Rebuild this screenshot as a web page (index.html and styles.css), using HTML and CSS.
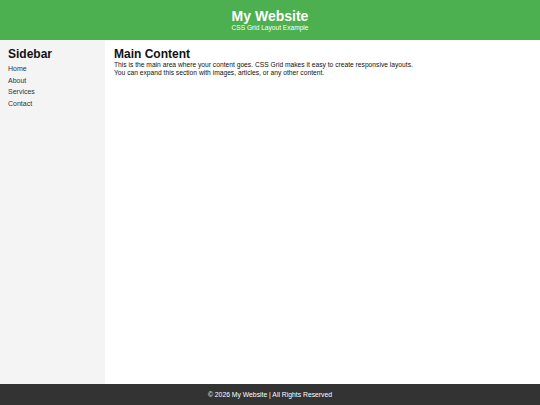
FILE: index.html
```html
<!DOCTYPE html>
<html>
<head>
<meta charset="utf-8">
<link rel="stylesheet" href="styles.css">
</head>
<body>
<div class="page">
  <header class="header">
    <h1 class="title">My Website</h1>
    <p class="subtitle">CSS Grid Layout Example</p>
  </header>
  <aside class="sidebar">
    <h2 class="side-title">Sidebar</h2>
    <ul class="nav">
      <li>Home</li>
      <li>About</li>
      <li>Services</li>
      <li>Contact</li>
    </ul>
  </aside>
  <main class="main">
    <h2 class="main-title">Main Content</h2>
    <p class="text">This is the main area where your content goes. CSS Grid makes it easy to create responsive layouts.<br>You can expand this section with images, articles, or any other content.</p>
  </main>
  <footer class="footer">© 2026 My Website | All Rights Reserved</footer>
</div>
</body>
</html>
```
FILE: styles.css
```css
html, body {
  margin: 0;
  padding: 0;
}
body {
  font-family: "Liberation Sans", Arial, sans-serif;
}
.page {
  display: grid;
  grid-template-columns: 105px 1fr;
  grid-template-rows: 40px 1fr 21px;
  height: 405px;
}
.header {
  grid-column: 1 / 3;
  background: #4caf50;
  color: #fff;
  text-align: center;
  padding-top: 8px;
  box-sizing: border-box;
}
.title {
  margin: 0;
  font-size: 14px;
  line-height: 16px;
  font-weight: bold;
}
.subtitle {
  margin: 0;
  font-size: 6.6px;
  line-height: 7px;
}
.sidebar {
  background: #f4f4f4;
  padding: 7px 8px;
}
.side-title, .main-title {
  margin: 0;
  font-size: 12px;
  line-height: 14px;
  font-weight: bold;
  color: #111;
}
.nav {
  list-style: none;
  margin: 2px 0 0;
  padding: 0;
  font-size: 7px;
  line-height: 11.7px;
  color: #333;
}
.main {
  padding: 7px 9px;
}
.text {
  margin: 0;
  font-size: 6.7px;
  line-height: 8px;
  color: #111;
}
.footer {
  grid-column: 1 / 3;
  background: #333;
  color: #fff;
  text-align: center;
  font-size: 6.8px;
  line-height: 21px;
}
```
